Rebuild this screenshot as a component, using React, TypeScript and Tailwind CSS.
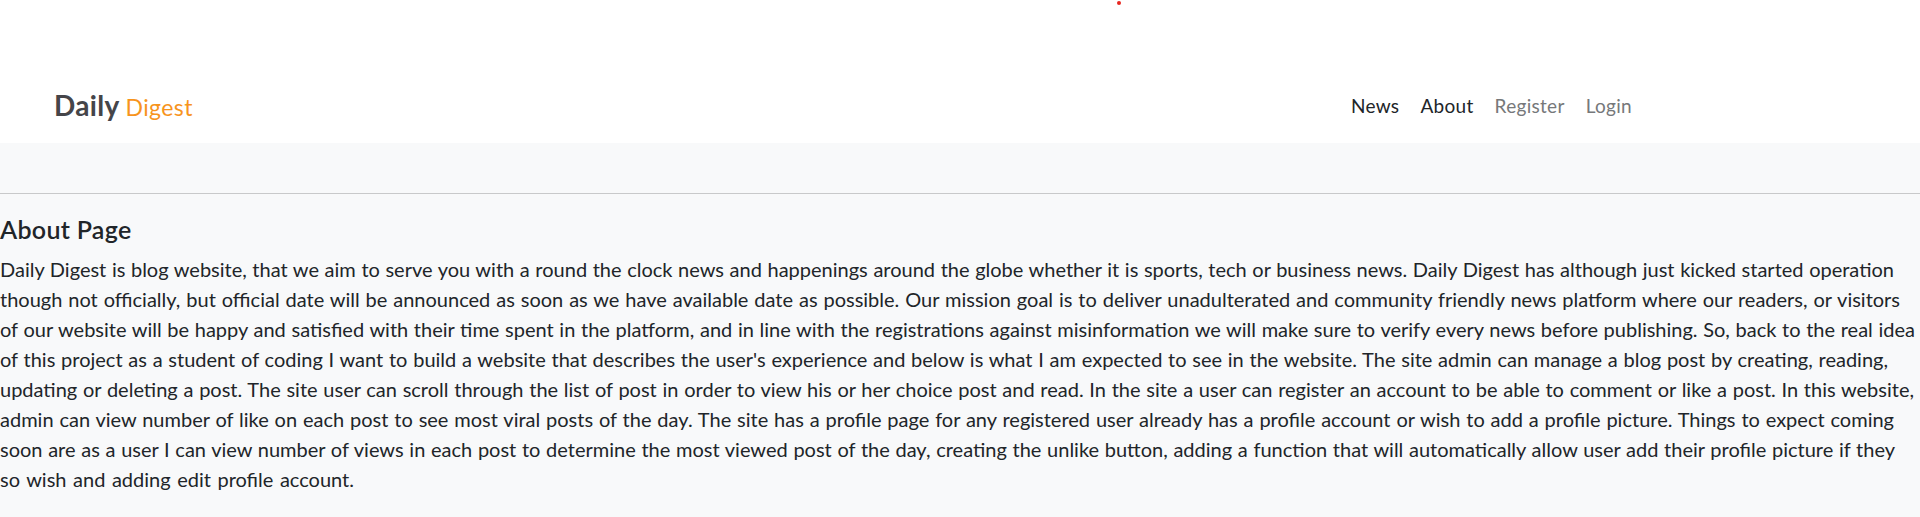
import React from "react";

const lines: { text: string; cls: string }[] = [
  {
    text: "Daily Digest is blog website, that we aim to serve you with a round the clock news and happenings around the globe whether it is sports, tech or business news. Daily Digest has although just kicked started operation",
    cls: "w-[1894px]",
  },
  {
    text: "though not officially, but official date will be announced as soon as we have available date as possible. Our mission goal is to deliver unadulterated and community friendly news platform where our readers, or visitors",
    cls: "w-[1900px]",
  },
  {
    text: "of our website will be happy and satisfied with their time spent in the platform, and in line with the registrations against misinformation we will make sure to verify every news before publishing. So, back to the real idea",
    cls: "w-[1915px]",
  },
  {
    text: "of this project as a student of coding I want to build a website that describes the user's experience and below is what I am expected to see in the website. The site admin can manage a blog post by creating, reading,",
    cls: "w-[1888px]",
  },
  {
    text: "updating or deleting a post. The site user can scroll through the list of post in order to view his or her choice post and read. In the site a user can register an account to be able to comment or like a post. In this website,",
    cls: "w-[1914px]",
  },
  {
    text: "admin can view number of like on each post to see most viral posts of the day. The site has a profile page for any registered user already has a profile account or wish to add a profile picture. Things to expect coming",
    cls: "w-[1894px]",
  },
  {
    text: "soon are as a user I can view number of views in each post to determine the most viewed post of the day, creating the unlike button, adding a function that will automatically allow user add their profile picture if they",
    cls: "w-[1895px]",
  },
  {
    text: "so wish and adding edit profile account.",
    cls: "w-[354px]",
  },
];

export default function App() {
  return (
    <div className="relative min-h-[517px] w-full bg-white font-['Lato','Open_Sans',sans-serif] text-[#212529]">
      <span className="absolute left-[1117px] top-[1px] h-[4px] w-[4px] rounded-full bg-[#e8261f]" />
      <header className="flex h-[143px] items-start bg-white pl-[54px]">
        <a className="mt-[91px] flex items-baseline gap-[6px]" href="#">
          <span className="text-[28px] font-bold leading-none tracking-[0.3px] text-[#454549]">Daily</span>
          <span className="text-[23px] leading-none tracking-[0.4px] text-[#f7941d]">Digest</span>
        </a>
        <nav className="ml-auto mr-[288px] mt-[96px] flex items-baseline gap-[21px] text-[19px] leading-none tracking-[0.3px]">
          <a href="#" className="text-[#212529]">News</a>
          <a href="#" className="text-[#212529]">About</a>
          <a href="#" className="text-[#76787a]">Register</a>
          <a href="#" className="text-[#76787a]">Login</a>
        </nav>
      </header>
      <main className="min-h-[374px] overflow-hidden bg-[#f8f9fa] pt-[50px]">
        <hr className="border-0 border-t border-[#c8c9ca]" />
        <h4 className="mt-[21px] text-[25px] font-semibold leading-[29px] tracking-[0.3px] text-[#212529]">About Page</h4>
        <p className="mt-[10px] text-[20px] leading-[30px] text-[#212529]">
          {lines.map((l, i) => (
            <span
              key={i}
              className={`block max-w-full text-justify [text-align-last:justify] ${l.cls}`}
            >
              {l.text}
            </span>
          ))}
        </p>
      </main>
    </div>
  );
}
